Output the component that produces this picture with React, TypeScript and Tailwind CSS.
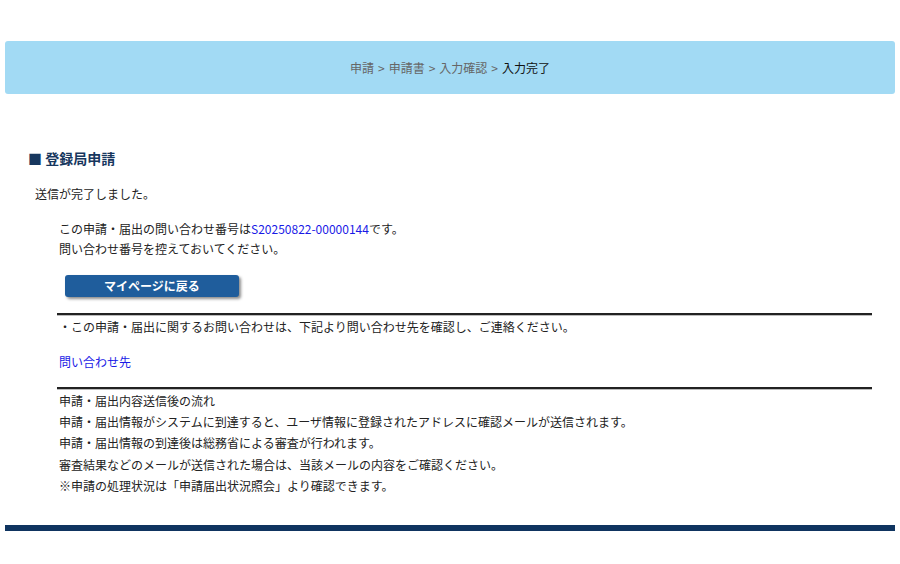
import React from 'react';

const font = { fontFamily: '"Noto Sans CJK JP", "Noto Sans", sans-serif' };

export default function App() {
  return (
    <div className="w-[900px] h-[564px] bg-white text-[12px] text-[#222]" style={font}>
      <div className="pt-[41px] px-[5px]">
        <div className="h-[53px] rounded-[3px] bg-[#a2daf4] flex items-center justify-center text-[12px] text-[#666]">
          <span>申請</span>
          <span className="mx-[4px]">&gt;</span>
          <span>申請書</span>
          <span className="mx-[4px]">&gt;</span>
          <span>入力確認</span>
          <span className="mx-[4px]">&gt;</span>
          <span className="text-[#111]">入力完了</span>
        </div>
      </div>

      <div className="pt-[54px] pl-[28px]">
        <h2 className="text-[14px] font-bold text-[#17375e] leading-[20px]">■ 登録局申請</h2>
      </div>

      <p className="pl-[35px] mt-[17px] leading-[18px]">送信が完了しました。</p>

      <div className="pl-[57px] pr-[28px] mt-[16px]">
        <div className="pl-[2px] leading-[20px]">
          <p>
            この申請・届出の問い合わせ番号は<span className="text-[#1a1ae6]">S20250822-00000144</span>です。
          </p>
          <p>問い合わせ番号を控えておいてください。</p>
        </div>

        <div className="pl-[8px] mt-[16px]">
          <button className="w-[174px] h-[22px] rounded-[3px] bg-[#1f5d9c] text-white font-bold text-[12px] shadow-[2px_2px_3px_rgba(0,0,0,0.45)] flex items-center justify-center">
            マイページに戻る
          </button>
        </div>

        <div className="mt-[16px] border-t-[2px] border-[#222] border-b border-b-[#bbb]"></div>
        <p className="pl-[2px] leading-[20px] mt-[1px]">・この申請・届出に関するお問い合わせは、下記より問い合わせ先を確認し、ご連絡ください。</p>
        <p className="pl-[2px] mt-[15px] leading-[20px]">
          <a className="text-[#1a1ae6]">問い合わせ先</a>
        </p>

        <div className="mt-[15px] border-t-[2px] border-[#222] border-b border-b-[#bbb]"></div>
        <div className="pl-[2px] leading-[21.2px] mt-[0px]">
          <p>申請・届出内容送信後の流れ</p>
          <p>申請・届出情報がシステムに到達すると、ユーザ情報に登録されたアドレスに確認メールが送信されます。</p>
          <p>申請・届出情報の到達後は総務省による審査が行われます。</p>
          <p>審査結果などのメールが送信された場合は、当該メールの内容をご確認ください。</p>
          <p>※申請の処理状況は「申請届出状況照会」より確認できます。</p>
        </div>
      </div>

      <div className="mx-[5px] mt-[29px] h-[6px] bg-[#0f3460]"></div>
    </div>
  );
}
